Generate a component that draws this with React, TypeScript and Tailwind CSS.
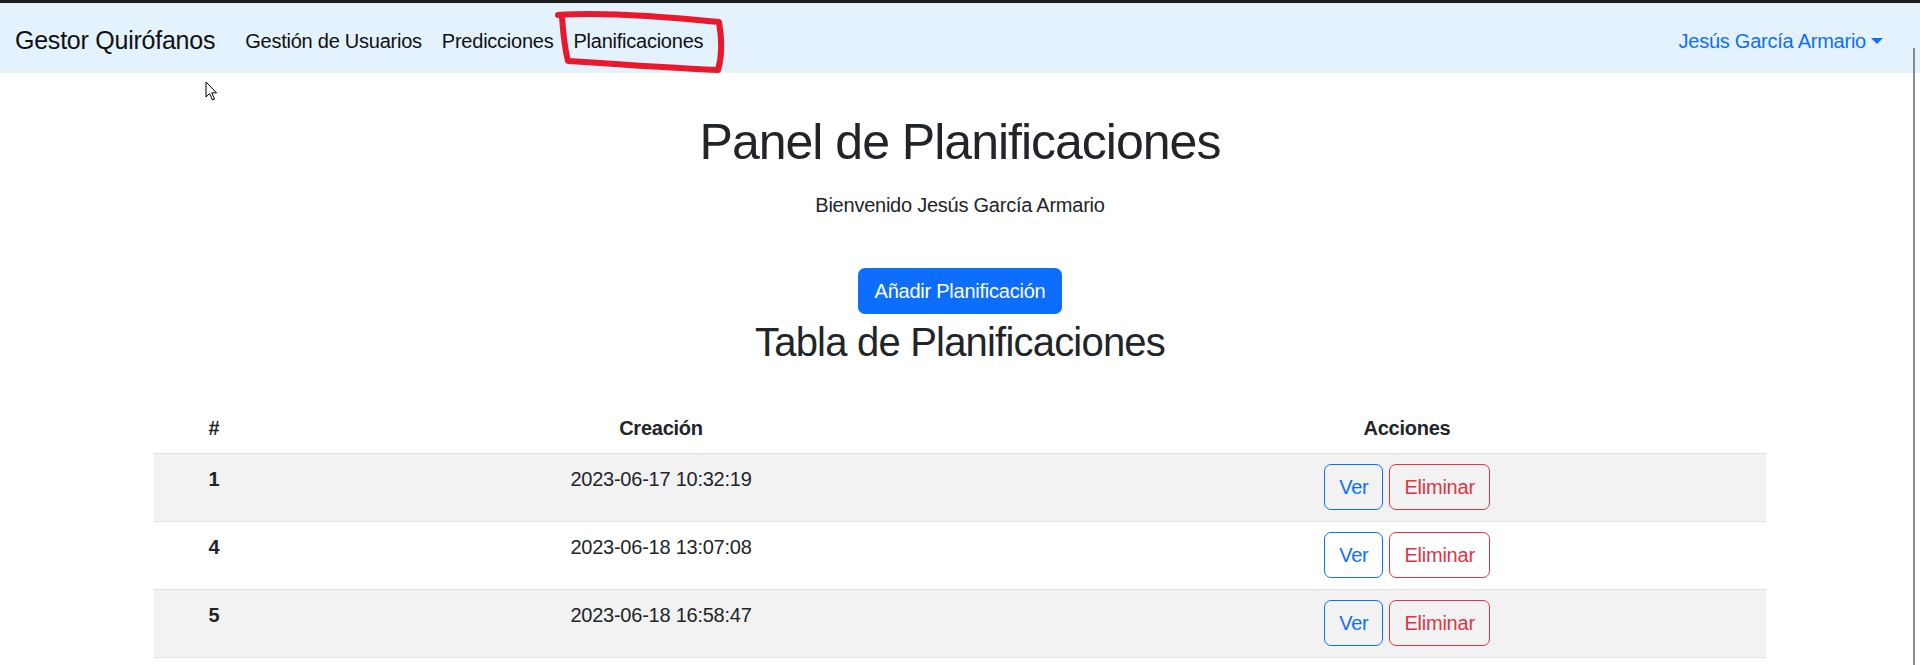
import React from "react";

type Plan = {
  id: number;
  created: string;
};

const plans: Plan[] = [
  { id: 1, created: "2023-06-17 10:32:19" },
  { id: 4, created: "2023-06-18 13:07:08" },
  { id: 5, created: "2023-06-18 16:58:47" },
];

const navLinks = ["Gestión de Usuarios", "Predicciones", "Planificaciones"];

// red marker drawn over the screenshot
const Annotation = () => (
  <svg
    className="pointer-events-none absolute left-0 top-0"
    width="1920"
    height="100"
    viewBox="0 0 1920 100"
  >
    <path
      d="M558 15 C600 12 660 16 719 22 C722 40 722 57 718 70 C670 68 612 64 568 61 C564 46 563 30 562 17"
      fill="none"
      stroke="#e8192c"
      strokeWidth="6"
      strokeLinecap="round"
      strokeLinejoin="round"
    />
  </svg>
);

const Cursor = () => (
  <svg
    className="pointer-events-none absolute left-[205px] top-[81px]"
    width="14"
    height="21"
    viewBox="0 0 14 21"
  >
    <path
      d="M1 1 L1 16 L4.5 12.5 L7.5 19 L9.5 18 L6.8 11.8 L11.5 11.8 Z"
      fill="#fff"
      stroke="#000"
      strokeWidth="1"
      strokeLinejoin="round"
    />
  </svg>
);

const App: React.FC = () => {
  return (
    <div className="relative min-h-screen bg-white font-['Liberation_Sans',Arial,sans-serif] tracking-[-0.015em] text-[#212529]">
      <div className="h-[3px] bg-[#1c1c1c]" />
      <nav className="flex h-[70px] items-center bg-[#e3f2fd] pl-[15px] pr-[37px] pt-[5px]">
        <a className="mr-[20px] text-[25px] leading-[37px] text-[#111]">
          Gestor Quirófanos
        </a>
        <ul className="flex">
          {navLinks.map((link) => (
            <li key={link}>
              <a className="block px-[10px] text-[20px] leading-[30px] text-[#111]">
                {link}
              </a>
            </li>
          ))}
        </ul>
        <div className="ml-auto flex items-center text-[20px] leading-[30px] text-[#0d6efd]">
          <span>Jesús García Armario</span>
          <span className="ml-[5px] h-0 w-0 border-x-[6px] border-t-[6px] border-x-transparent border-t-[#0d6efd]" />
        </div>
      </nav>

      <main className="mx-auto w-[1612px] text-center">
        <h1 className="mt-[39px] text-[50px] leading-[60px] tracking-[-0.02em]">
          Panel de Planificaciones
        </h1>
        <p className="mt-[18px] text-[20px] leading-[30px]">
          Bienvenido Jesús García Armario
        </p>
        <button className="mx-auto mt-[48px] block h-[46px] rounded-[7px] bg-[#0d6efd] px-[17px] text-[20px] leading-[30px] text-white">
          Añadir Planificación
        </button>
        <h2 className="mt-[4px] text-[40px] leading-[48px] tracking-[-0.02em]">
          Tabla de Planificaciones
        </h2>

        <table className="mt-[37px] w-full table-fixed border-collapse text-[20px] leading-[30px]">
          <thead>
            <tr className="border-b border-[#dee2e6]">
              <th className="w-[120px] py-[10px] font-bold">#</th>
              <th className="w-[774px] py-[10px] font-bold">Creación</th>
              <th className="py-[10px] font-bold">Acciones</th>
            </tr>
          </thead>
          <tbody>
            {plans.map((plan, idx) => (
              <tr
                key={plan.id}
                className={
                  idx % 2 === 0
                    ? "border-b border-[#dee2e6] bg-[#f2f2f2]"
                    : "border-b border-[#dee2e6] bg-white"
                }
              >
                <th className="pb-[11px] pt-[10px] align-top font-bold">
                  {plan.id}
                </th>
                <td className="pb-[11px] pt-[10px] align-top">{plan.created}</td>
                <td className="pb-[11px] pt-[10px] align-top">
                  <div className="flex justify-center gap-[6px]">
                    <button className="h-[46px] rounded-[7px] border border-[#0d6efd] px-[14px] text-[#0d6efd]">
                      Ver
                    </button>
                    <button className="h-[46px] rounded-[7px] border border-[#dc3545] px-[14px] text-[#dc3545]">
                      Eliminar
                    </button>
                  </div>
                </td>
              </tr>
            ))}
          </tbody>
        </table>
      </main>

      <Annotation />
      <Cursor />
      <div className="absolute bottom-0 right-[5px] top-[48px] w-[2px] bg-[#8a8a8a]" />
    </div>
  );
};

export default App;
